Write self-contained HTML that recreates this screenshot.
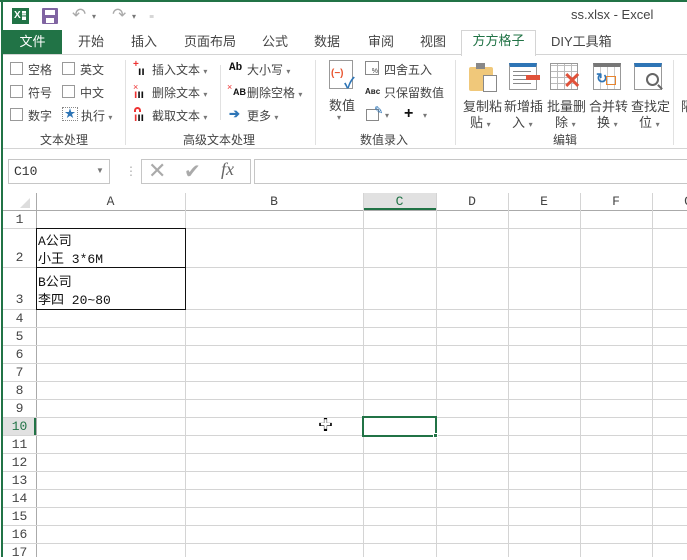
<!DOCTYPE html>
<html><head><meta charset="utf-8"><style>
*{margin:0;padding:0;box-sizing:border-box}
body{width:687px;height:557px;overflow:hidden;background:#fff;position:relative;font-family:"Liberation Sans","Noto Sans CJK SC",sans-serif;font-size:12px;color:#444}
.a{position:absolute;white-space:nowrap}
.cb{position:absolute;width:13px;height:13px;border:1px solid #999;background:#fff}
.dd{font-size:8px;color:#777}
.hl{position:absolute;height:1px;background:#d4d4d4}
.vl{position:absolute;width:1px;background:#d4d4d4}
.rn{position:absolute;left:3px;width:33px;text-align:center;font-family:"Liberation Mono",monospace;font-size:13px;color:#444}
.cn{position:absolute;top:194px;text-align:center;font-family:"Liberation Mono",monospace;font-size:13px;color:#444}
.sm{font-family:"Liberation Mono","Noto Sans CJK SC",monospace;font-size:13px;color:#111}
</style></head><body>
<div class="a" style="left:0;top:0;width:687px;height:2px;background:#217346"></div>
<div class="a" style="left:1px;top:0;width:2px;height:557px;background:#217346"></div>
<div class="a" style="left:12px;top:8px;width:17px;height:16px;background:#217346;color:#fff;font-size:10px;font-weight:bold;line-height:16px;padding-left:2px">X<span style="background:#fff;color:#217346;margin-left:1px;font-size:8px">≡</span></div>
<div class="a" style="left:42px;top:8px;width:16px;height:16px;background:#8064a2;border-radius:1px"><div class="a" style="left:3px;top:2px;width:10px;height:5px;background:#fff"></div><div class="a" style="left:4px;top:10px;width:8px;height:5px;background:#fff"></div></div>
<div class="a" style="left:72px;top:5px;font-size:17px;color:#aaa">↶</div><div class="a dd" style="left:92px;top:12px">▾</div>
<div class="a" style="left:112px;top:5px;font-size:17px;color:#aaa">↷</div><div class="a dd" style="left:132px;top:12px">▾</div>
<div class="a" style="left:149px;top:10px;font-size:10px;color:#666">₌</div>
<div class="a" style="left:571px;top:7px;font-size:13px;color:#444">ss.xlsx - Excel</div>
<div class="a" style="left:3px;top:30px;width:59px;height:24px;background:#217346;color:#fff;font-size:13px;text-align:center;line-height:24px">文件</div>
<div class="a" style="left:78px;top:31px;font-size:13px">开始</div>
<div class="a" style="left:131px;top:31px;font-size:13px">插入</div>
<div class="a" style="left:184px;top:31px;font-size:13px">页面布局</div>
<div class="a" style="left:262px;top:31px;font-size:13px">公式</div>
<div class="a" style="left:314px;top:31px;font-size:13px">数据</div>
<div class="a" style="left:368px;top:31px;font-size:13px">审阅</div>
<div class="a" style="left:420px;top:31px;font-size:13px">视图</div>
<div class="a" style="left:461px;top:30px;width:75px;height:26px;border:1px solid #d4d4d4;border-bottom:none;background:#fff;color:#217346;font-size:13px;text-align:center;line-height:20px">方方格子</div>
<div class="a" style="left:551px;top:31px;font-size:13px">DIY工具箱</div>
<div class="a" style="left:3px;top:54px;width:458px;height:1px;background:#d4d4d4"></div>
<div class="a" style="left:536px;top:54px;width:151px;height:1px;background:#d4d4d4"></div>
<div class="a" style="left:3px;top:148px;width:684px;height:1px;background:#d4d4d4"></div>
<div class="cb" style="left:10px;top:62px"></div><div class="a" style="left:28px;top:61px">空格</div>
<div class="cb" style="left:62px;top:62px"></div><div class="a" style="left:80px;top:61px">英文</div>
<div class="cb" style="left:10px;top:85px"></div><div class="a" style="left:28px;top:84px">符号</div>
<div class="cb" style="left:62px;top:85px"></div><div class="a" style="left:80px;top:84px">中文</div>
<div class="cb" style="left:10px;top:108px"></div><div class="a" style="left:28px;top:107px">数字</div>
<div class="a" style="left:62px;top:107px;width:16px;height:14px;border:1px dotted #888;color:#2e75b6;font-size:11px;text-align:center;line-height:12px">★</div><div class="a" style="left:81px;top:107px">执行 <span class="dd">▾</span></div>
<div class="a" style="left:40px;top:131px">文本处理</div>
<div class="a" style="left:125px;top:60px;width:1px;height:85px;background:#e1e1e1"></div>
<div class="a" style="left:133px;top:59px;color:#e33;font-size:10px;font-weight:bold">+</div><div class="a" style="left:138px;top:64px;font-size:12px;font-weight:bold;color:#111">ıı</div>
<div class="a" style="left:152px;top:61px">插入文本 <span class="dd">▾</span></div>
<div class="a" style="left:133px;top:82px;color:#e33;font-size:9px">×</div><div class="a" style="left:134px;top:87px;font-size:12px;font-weight:bold;color:#111"><span style="color:#e33">ı</span>ıı</div>
<div class="a" style="left:152px;top:84px">删除文本 <span class="dd">▾</span></div>
<div class="a" style="left:134px;top:107px;width:7px;height:5px;border:2px solid #e33;border-bottom:none;border-radius:4px 4px 0 0"></div><div class="a" style="left:134px;top:110px;font-size:12px;font-weight:bold;color:#111"><span style="color:#e33">ı</span>ıı</div>
<div class="a" style="left:152px;top:107px">截取文本 <span class="dd">▾</span></div>
<div class="a" style="left:220px;top:65px;width:1px;height:55px;background:#e1e1e1"></div>
<div class="a" style="left:229px;top:62px;font-family:'Liberation Mono',monospace;font-weight:bold;color:#111;font-size:11px">Ab</div><div class="a" style="left:247px;top:61px">大小写 <span class="dd">▾</span></div>
<div class="a" style="left:227px;top:82px;color:#e33;font-size:9px">×</div><div class="a" style="left:233px;top:87px;font-weight:bold;color:#111;font-size:9px">AB</div><div class="a" style="left:247px;top:84px">删除空格 <span class="dd">▾</span></div>
<div class="a" style="left:229px;top:106px;color:#2e75b6;font-weight:bold;font-size:13px">➔</div><div class="a" style="left:247px;top:107px">更多 <span class="dd">▾</span></div>
<div class="a" style="left:183px;top:131px">高级文本处理</div>
<div class="a" style="left:315px;top:60px;width:1px;height:85px;background:#e1e1e1"></div>
<div class="a" style="left:329px;top:60px;width:24px;height:29px;border:1px solid #999;background:#fff"></div>
<div class="a" style="left:331px;top:68px;color:#e8542e;font-size:10px;font-weight:bold">(−)</div>
<div class="a" style="left:344px;top:72px;color:#2e75b6;font-size:15px;font-weight:bold">✓</div>
<div class="a" style="left:329px;top:95px;font-size:13px">数值</div><div class="a dd" style="left:337px;top:113px">▾</div>
<div class="a" style="left:365px;top:61px;width:14px;height:14px;border:1px solid #888;font-size:7px;line-height:20px;text-align:right">%</div>
<div class="a" style="left:384px;top:61px">四舍五入</div>
<div class="a" style="left:365px;top:87px;font-size:8px;font-weight:bold;color:#222">Aʙᴄ</div><div class="a" style="left:384px;top:84px">只保留数值</div>
<div class="a" style="left:366px;top:109px;width:13px;height:12px;border:1px solid #888"></div><div class="a" style="left:374px;top:104px;color:#2e75b6;font-size:11px">✎</div><div class="a dd" style="left:385px;top:111px">▾</div>
<div class="a" style="left:404px;top:105px;font-size:16px;font-weight:bold;color:#111">+</div><div class="a dd" style="left:423px;top:111px">▾</div>
<div class="a" style="left:360px;top:131px">数值录入</div>
<div class="a" style="left:455px;top:60px;width:1px;height:85px;background:#e1e1e1"></div>
<div class="a" style="left:469px;top:67px;width:24px;height:24px;background:#f0c87a;border-radius:2px"></div>
<div class="a" style="left:476px;top:63px;width:9px;height:6px;background:#888"></div>
<div class="a" style="left:483px;top:75px;width:14px;height:17px;background:#fff;border:1px solid #888"></div>
<div class="a" style="left:463px;top:96px;font-size:13px">复制粘</div><div class="a" style="left:470px;top:112px;font-size:13px">贴 <span class="dd">▾</span></div>
<div class="a" style="left:509px;top:63px;width:28px;height:27px;border:1px solid #999;border-top:4px solid #2e75b6"></div>
<div class="a" style="left:513px;top:71px;width:18px;height:1px;background:#888;box-shadow:0 4px #888,0 8px #888,0 12px #888"></div>
<div class="a" style="left:526px;top:75px;width:14px;height:5px;background:#e0523a"></div>
<div class="a" style="left:504px;top:96px;font-size:13px">新增插</div><div class="a" style="left:512px;top:112px;font-size:13px">入 <span class="dd">▾</span></div>
<div class="a" style="left:550px;top:63px;width:28px;height:27px;border:1px solid #999;background:repeating-linear-gradient(90deg,transparent 0 6px,#bbb 6px 7px),repeating-linear-gradient(0deg,transparent 0 5px,#bbb 5px 6px)"></div>
<div class="a" style="left:563px;top:70px;color:#e0523a;font-size:22px;font-weight:bold;line-height:22px">✕</div>
<div class="a" style="left:547px;top:96px;font-size:13px">批量删</div><div class="a" style="left:555px;top:112px;font-size:13px">除 <span class="dd">▾</span></div>
<div class="a" style="left:593px;top:63px;width:28px;height:27px;border:1px solid #999;border-top:4px solid #777;background:repeating-linear-gradient(90deg,transparent 0 6px,#ccc 6px 7px)"></div>
<div class="a" style="left:596px;top:70px;color:#2e75b6;font-size:14px;font-weight:bold">↻</div>
<div class="a" style="left:606px;top:76px;width:10px;height:9px;border:1px solid #e8842e"></div>
<div class="a" style="left:589px;top:96px;font-size:13px">合并转</div><div class="a" style="left:597px;top:112px;font-size:13px">换 <span class="dd">▾</span></div>
<div class="a" style="left:634px;top:63px;width:28px;height:27px;border:1px solid #999;border-top:4px solid #2e75b6"></div>
<div class="a" style="left:646px;top:73px;width:13px;height:13px;border:2px solid #666;border-radius:50%;background:#fff"></div>
<div class="a" style="left:657px;top:86px;width:6px;height:2px;background:#666;transform:rotate(45deg)"></div>
<div class="a" style="left:631px;top:96px;font-size:13px">查找定</div><div class="a" style="left:639px;top:112px;font-size:13px">位 <span class="dd">▾</span></div>
<div class="a" style="left:553px;top:131px">编辑</div>
<div class="a" style="left:673px;top:60px;width:1px;height:85px;background:#e1e1e1"></div>
<div class="a" style="left:681px;top:96px;font-size:13px">隔</div>
<div class="a" style="left:8px;top:159px;width:102px;height:25px;border:1px solid #c6c6c6"></div>
<div class="a" style="left:14px;top:164px;font-family:'Liberation Mono',monospace;font-size:13px;color:#333">C10</div>
<div class="a dd" style="left:96px;top:166px">▼</div>
<div class="a" style="left:125px;top:164px;color:#aaa;font-size:12px">⋮</div>
<div class="a" style="left:141px;top:159px;width:110px;height:25px;border:1px solid #c6c6c6"></div>
<div class="a" style="left:148px;top:158px;color:#aaa;font-size:22px">✕</div>
<div class="a" style="left:184px;top:159px;color:#aaa;font-size:20px">✔</div>
<div class="a" style="left:221px;top:159px;color:#666;font-size:18px;font-style:italic;font-family:'Liberation Serif',serif">fx</div>
<div class="a" style="left:254px;top:159px;width:440px;height:25px;border:1px solid #c6c6c6"></div>
<div class="a" style="left:3px;top:193px;width:684px;height:17px;background:#fff"></div>
<div class="a" style="left:363px;top:193px;width:73px;height:17px;background:#e1e1e1"></div>
<div class="a" style="left:363px;top:208px;width:73px;height:2px;background:#217346"></div>
<div class="a" style="left:20px;top:198px;width:0;height:0;border-left:10px solid transparent;border-bottom:10px solid #ddd"></div>
<div class="a" style="left:3px;top:210px;width:684px;height:1px;background:#aaa"></div>
<div class="cn" style="left:36px;width:149px">A</div>
<div class="cn" style="left:185px;width:178px">B</div>
<div class="cn" style="left:363px;width:73px;color:#217346">C</div>
<div class="cn" style="left:436px;width:72px">D</div>
<div class="cn" style="left:508px;width:72px">E</div>
<div class="cn" style="left:580px;width:72px">F</div>
<div class="cn" style="left:652px;width:72px">G</div>
<div class="a" style="left:3px;top:417px;width:33px;height:18px;background:#e1e1e1"></div>
<div class="a" style="left:34px;top:417px;width:2px;height:18px;background:#217346"></div>
<div class="a" style="left:36px;top:193px;width:1px;height:364px;background:#aaa"></div>
<div class="vl" style="left:185px;top:193px;height:364px"></div>
<div class="vl" style="left:363px;top:193px;height:364px"></div>
<div class="vl" style="left:436px;top:193px;height:364px"></div>
<div class="vl" style="left:508px;top:193px;height:364px"></div>
<div class="vl" style="left:580px;top:193px;height:364px"></div>
<div class="vl" style="left:652px;top:193px;height:364px"></div>
<div class="hl" style="left:3px;width:684px;top:228px"></div>
<div class="hl" style="left:3px;width:684px;top:267px"></div>
<div class="hl" style="left:3px;width:684px;top:309px"></div>
<div class="hl" style="left:3px;width:684px;top:327px"></div>
<div class="hl" style="left:3px;width:684px;top:345px"></div>
<div class="hl" style="left:3px;width:684px;top:363px"></div>
<div class="hl" style="left:3px;width:684px;top:381px"></div>
<div class="hl" style="left:3px;width:684px;top:399px"></div>
<div class="hl" style="left:3px;width:684px;top:417px"></div>
<div class="hl" style="left:3px;width:684px;top:435px"></div>
<div class="hl" style="left:3px;width:684px;top:453px"></div>
<div class="hl" style="left:3px;width:684px;top:471px"></div>
<div class="hl" style="left:3px;width:684px;top:489px"></div>
<div class="hl" style="left:3px;width:684px;top:507px"></div>
<div class="hl" style="left:3px;width:684px;top:525px"></div>
<div class="hl" style="left:3px;width:684px;top:543px"></div>
<div class="rn" style="top:212px">1</div>
<div class="rn" style="top:250px">2</div>
<div class="rn" style="top:292px">3</div>
<div class="rn" style="top:311px">4</div>
<div class="rn" style="top:329px">5</div>
<div class="rn" style="top:347px">6</div>
<div class="rn" style="top:365px">7</div>
<div class="rn" style="top:383px">8</div>
<div class="rn" style="top:401px">9</div>
<div class="rn" style="top:419px;color:#217346">10</div>
<div class="rn" style="top:437px">11</div>
<div class="rn" style="top:455px">12</div>
<div class="rn" style="top:473px">13</div>
<div class="rn" style="top:491px">14</div>
<div class="rn" style="top:509px">15</div>
<div class="rn" style="top:527px">16</div>
<div class="rn" style="top:545px">17</div>
<div class="a" style="left:36px;top:228px;width:150px;height:82px;border:1px solid #111"></div>
<div class="a" style="left:36px;top:267px;width:150px;height:1px;background:#111"></div>
<div class="a sm" style="left:38px;top:230px">A公司</div>
<div class="a sm" style="left:38px;top:248px">小王 3*6M</div>
<div class="a sm" style="left:38px;top:271px">B公司</div>
<div class="a sm" style="left:38px;top:289px">李四 20~80</div>
<div class="a" style="left:362px;top:416px;width:75px;height:21px;border:2px solid #217346"></div>
<div class="a" style="left:433px;top:433px;width:5px;height:5px;background:#217346;border:1px solid #fff"></div>
<div class="a" style="left:318px;top:414px;font-size:15px;color:#000;font-weight:bold">✚</div>
<div class="a" style="left:320px;top:416px;font-size:11px;color:#fff">✚</div>
</body></html>
